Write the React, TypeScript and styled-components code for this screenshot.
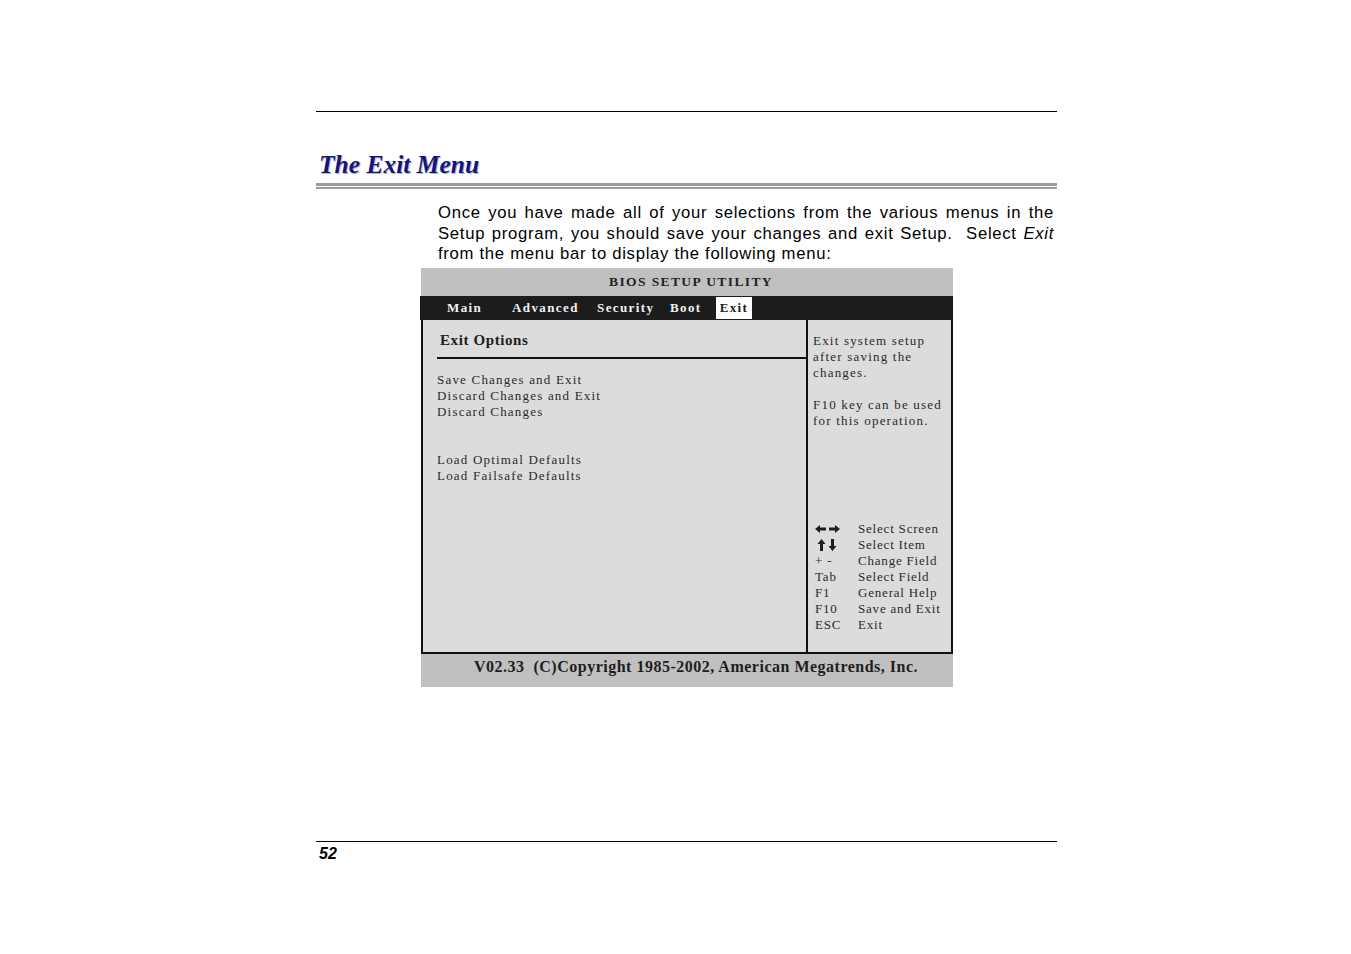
import * as React from 'react'
import styled, { createGlobalStyle } from 'styled-components'

const Global = createGlobalStyle`
  html, body {
    margin: 0;
    padding: 0;
    background: #ffffff;
  }
  body {
    font-family: 'Liberation Sans', Arial, sans-serif;
    color: #000;
  }
`

const Page = styled.div`
  width: 741px;
  margin-left: 316px;
  padding-top: 111px;
`

const Rule = styled.div`
  height: 1px;
  background: #000;
`

const Title = styled.h1`
  margin: 38px 0 0 3px;
  font-family: 'Liberation Serif', 'Times New Roman', serif;
  font-style: italic;
  font-weight: bold;
  font-size: 25.5px;
  line-height: 30px;
  color: #14147e;
  text-shadow: 1px 1px 0 #b8b8c8;
`

const DoubleRule = styled.div`
  margin-top: 3px;
  height: 3px;
  background: #9c9c9c;
  border-bottom: 1px solid #fff;
  box-shadow: 0 2px 0 #9c9c9c;
`

const Lead = styled.div`
  margin: 16px 3px 0 122px;
  font-size: 16.7px;
  letter-spacing: 0.7px;
  line-height: 20.5px;
  color: #000;
`

const LeadLine = styled.div<{ $last?: boolean }>`
  text-align: justify;
  text-align-last: ${p => (p.$last ? 'left' : 'justify')};
  white-space: nowrap;
`

const Bios = styled.div`
  margin: 3px 0 0 105px;
  width: 532px;
  font-family: 'Liberation Serif', 'Times New Roman', serif;
  color: #2a2a2a;
`

const TitleBar = styled.div`
  height: 28px;
  background: #c0c0c0;
  display: flex;
  align-items: center;
  justify-content: center;
  font-weight: bold;
  font-size: 13.5px;
  letter-spacing: 1.4px;
  color: #222;
  padding: 1px 0 0 8px;
  box-sizing: border-box;
`

const MenuBar = styled.div`
  height: 24px;
  margin-left: -1px;
  background: #1c1c1c;
  display: flex;
  align-items: stretch;
  padding-left: 27px;
`

const MenuItem = styled.div<{ $active?: boolean; $w: number }>`
  width: ${p => p.$w}px;
  display: flex;
  align-items: center;
  justify-content: ${p => (p.$active ? 'center' : 'flex-start')};
  font-weight: bold;
  font-size: 13px;
  letter-spacing: 1.4px;
  color: ${p => (p.$active ? '#1c1c1c' : '#f2f2f2')};
  background: ${p => (p.$active ? '#ffffff' : 'transparent')};
  margin: 1px 0;
`

const Body = styled.div`
  height: 334px;
  box-sizing: border-box;
  background: #dcdcdc;
  border: 2px solid #111;
  border-top: none;
  display: flex;
`

const LeftPanel = styled.div`
  width: 383px;
  border-right: 2px solid #111;
  padding-top: 11px;
`

const Heading = styled.div`
  margin-left: 14px;
  padding: 0 0 8px 3px;
  border-bottom: 2px solid #111;
  font-weight: bold;
  font-size: 15px;
  line-height: 18px;
  letter-spacing: 0.6px;
  color: #1e1e1e;
`

const OptionGroup = styled.div<{ $gap: number }>`
  margin: ${p => p.$gap}px 0 0 14px;
`

const Line = styled.div`
  font-size: 13px;
  line-height: 16px;
  letter-spacing: 1.2px;
  white-space: nowrap;
`

const RightPanel = styled.div`
  flex: 1;
  display: flex;
  flex-direction: column;
  justify-content: space-between;
  padding: 13px 0 19px 5px;
`

const HelpText = styled.div`
  display: flex;
  flex-direction: column;
  gap: 16px;
`

const KeyList = styled.div`
  display: grid;
  grid-template-columns: 43px auto;
  padding-left: 2px;
`

const KeyCell = styled.div`
  font-size: 13px;
  line-height: 16px;
  letter-spacing: 0.8px;
  display: flex;
  align-items: center;
  height: 16px;
  white-space: nowrap;
`

const Footer = styled.div`
  height: 33px;
  box-sizing: border-box;
  background: #c0c0c0;
  display: flex;
  align-items: center;
  justify-content: center;
  font-weight: bold;
  font-size: 16px;
  letter-spacing: 0.5px;
  color: #1e1e1e;
  padding: 0 0 6px 18px;
`

const Spacer = styled.div`
  height: 154px;
`

const PageNumber = styled.div`
  margin: 2px 0 0 3px;
  font-weight: bold;
  font-style: italic;
  font-size: 16px;
  line-height: 19px;
`

const LeftRight = () => (
  <svg width="25" height="10" viewBox="0 0 25 10">
    <path d="M0 5 L5 1 L5 3.5 L11 3.5 L11 6.5 L5 6.5 L5 9 Z" fill="#1e1e1e" />
    <path d="M25 5 L20 1 L20 3.5 L14 3.5 L14 6.5 L20 6.5 L20 9 Z" fill="#1e1e1e" />
  </svg>
)

const UpDown = () => (
  <svg width="20" height="12" viewBox="0 0 20 12" style={{ marginLeft: 2 }}>
    <path d="M4.5 0 L8.5 5 L6 5 L6 12 L3 12 L3 5 L0.5 5 Z" fill="#1e1e1e" />
    <path d="M15.5 12 L19.5 7 L17 7 L17 0 L14 0 L14 7 L11.5 7 Z" fill="#1e1e1e" />
  </svg>
)

const keys: [React.ReactNode, string][] = [
  [<LeftRight key="lr" />, 'Select Screen'],
  [<UpDown key="ud" />, 'Select Item'],
  ['+ -', 'Change Field'],
  ['Tab', 'Select Field'],
  ['F1', 'General Help'],
  ['F10', 'Save and Exit'],
  ['ESC', 'Exit'],
]

const menu = [
  { label: 'Main', w: 65 },
  { label: 'Advanced', w: 85 },
  { label: 'Security', w: 73 },
  { label: 'Boot', w: 46 },
  { label: 'Exit', w: 36, active: true },
]

export default function App() {
  return (
    <>
      <Global />
      <Page>
        <Rule />
        <Title>The Exit Menu</Title>
        <DoubleRule />
        <Lead>
          <LeadLine>Once you have made all of your selections from the various menus in the</LeadLine>
          <LeadLine>
            Setup program, you should save your changes and exit Setup.&nbsp; Select <i>Exit</i>
          </LeadLine>
          <LeadLine $last>from the menu bar to display the following menu:</LeadLine>
        </Lead>
        <Bios>
          <TitleBar>BIOS SETUP UTILITY</TitleBar>
          <MenuBar>
            {menu.map(m => (
              <MenuItem key={m.label} $w={m.w} $active={m.active}>
                {m.label}
              </MenuItem>
            ))}
          </MenuBar>
          <Body>
            <LeftPanel>
              <Heading>Exit Options</Heading>
              <OptionGroup $gap={13}>
                <Line>Save Changes and Exit</Line>
                <Line>Discard Changes and Exit</Line>
                <Line>Discard Changes</Line>
              </OptionGroup>
              <OptionGroup $gap={32}>
                <Line>Load Optimal Defaults</Line>
                <Line>Load Failsafe Defaults</Line>
              </OptionGroup>
            </LeftPanel>
            <RightPanel>
              <HelpText>
                <div>
                  <Line>Exit system setup</Line>
                  <Line>after saving the</Line>
                  <Line>changes.</Line>
                </div>
                <div>
                  <Line>F10 key can be used</Line>
                  <Line>for this operation.</Line>
                </div>
              </HelpText>
              <KeyList>
                {keys.map(([k, d], i) => (
                  <React.Fragment key={i}>
                    <KeyCell>{k}</KeyCell>
                    <KeyCell>{d}</KeyCell>
                  </React.Fragment>
                ))}
              </KeyList>
            </RightPanel>
          </Body>
          <Footer>V02.33&nbsp; (C)Copyright 1985-2002, American Megatrends, Inc.</Footer>
        </Bios>
        <Spacer />
        <Rule />
        <PageNumber>52</PageNumber>
      </Page>
    </>
  )
}
